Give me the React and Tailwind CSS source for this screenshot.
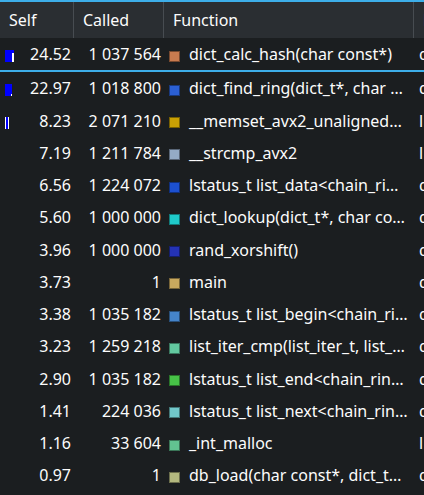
const rows = [
  { self: "24.52", called: "1 037 564", color: "#c97b4f", fn: "dict_calc_hash(char const*)", loc: "dict_test", bar: 1 },
  { self: "22.97", called: "1 018 800", color: "#2b5fd3", fn: "dict_find_ring(dict_t*, char …", loc: "dict_test", bar: 2 },
  { self: "8.23", called: "2 071 210", color: "#c9a004", fn: "__memset_avx2_unaligned…", loc: "libc.so.6", bar: 3 },
  { self: "7.19", called: "1 211 784", color: "#94abc6", fn: "__strcmp_avx2", loc: "libc.so.6" },
  { self: "6.56", called: "1 224 072", color: "#1c50d0", fn: "lstatus_t list_data<chain_ri…", loc: "dict_test" },
  { self: "5.60", called: "1 000 000", color: "#1fcaca", fn: "dict_lookup(dict_t*, char co…", loc: "dict_test" },
  { self: "3.96", called: "1 000 000", color: "#2432b4", fn: "rand_xorshift()", loc: "dict_test" },
  { self: "3.73", called: "1", color: "#c9a95e", fn: "main", loc: "dict_test" },
  { self: "3.38", called: "1 035 182", color: "#4584ca", fn: "lstatus_t list_begin<chain_ri…", loc: "dict_test" },
  { self: "3.23", called: "1 259 218", color: "#63c9a0", fn: "list_iter_cmp(list_iter_t, list_…", loc: "dict_test" },
  { self: "2.90", called: "1 035 182", color: "#47c247", fn: "lstatus_t list_end<chain_rin…", loc: "dict_test" },
  { self: "1.41", called: "224 036", color: "#72c8ca", fn: "lstatus_t list_next<chain_rin…", loc: "dict_test" },
  { self: "1.16", called: "33 604", color: "#62c391", fn: "_int_malloc", loc: "libc.so.6" },
  { self: "0.97", called: "1", color: "#b3b87f", fn: "db_load(char const*, dict_t…", loc: "dict_test" },
];

function Bar({ kind }) {
  if (kind === 1)
    return (
      <div className="relative w-[9px] h-[12px] bg-[#0000ff]">
        <div className="absolute right-0 bottom-0 w-[2px] h-[9px] bg-white" />
      </div>
    );
  if (kind === 2)
    return (
      <div className="relative w-[7px] h-[12px] bg-[#0000ff]">
        <div className="absolute right-0 bottom-0 w-[1px] h-[2px] bg-white" />
      </div>
    );
  if (kind === 3)
    return (
      <div className="flex h-[12px]">
        <div className="w-[1px] bg-white" />
        <div className="w-[2px] bg-[#0000ff]" />
        <div className="w-[1px] bg-white" />
      </div>
    );
  return null;
}

export default function App() {
  return (
    <div
      className="w-[424px] h-[495px] overflow-hidden bg-[#1b1e20] text-[#fcfcfc] text-[16px] leading-none"
      style={{ fontFamily: '"Noto Sans", "DejaVu Sans", sans-serif' }}
    >
      <div className="h-[2px] bg-[#3daee9]" />
      {/* header */}
      <div className="flex h-[36px] bg-[#2a2e32] whitespace-nowrap">
        <div className="w-[74px] shrink-0 border-r border-[#474c51] flex items-center pl-[9px]">Self</div>
        <div className="w-[90px] shrink-0 border-r border-[#474c51] flex items-center pl-[9px]">Called</div>
        <div className="w-[250px] shrink-0 border-r border-[#474c51] flex items-center pl-[9px]">Function</div>
        <div className="flex-1 flex items-center pl-[9px] overflow-hidden">Location</div>
      </div>
      {rows.map((r, i) => (
        <div key={i}>
          <div className="flex h-[32.25px] whitespace-nowrap">
            <div className="w-[74px] shrink-0 flex items-center justify-between pl-[5px] pr-[3px]">
              <div className="mt-[4px]">
                <Bar kind={r.bar} />
              </div>
              <span>{r.self}</span>
            </div>
            <div className="w-[90px] shrink-0 flex items-center justify-end pr-[3px]">{r.called}</div>
            <div className="w-[250px] shrink-0 flex items-center pl-[5px] overflow-hidden">
              <span
                className="w-[11px] h-[11px] shrink-0 mt-[4px] border border-black/40"
                style={{ backgroundColor: r.color }}
              />
              <span className="ml-[9px]">{r.fn}</span>
            </div>
            <div className="flex-1 flex items-center pl-[5px] overflow-hidden">{r.loc}</div>
          </div>
          {i === 0 && <div className="h-[2px] bg-[#3daee9]" />}
        </div>
      ))}
    </div>
  );
}
